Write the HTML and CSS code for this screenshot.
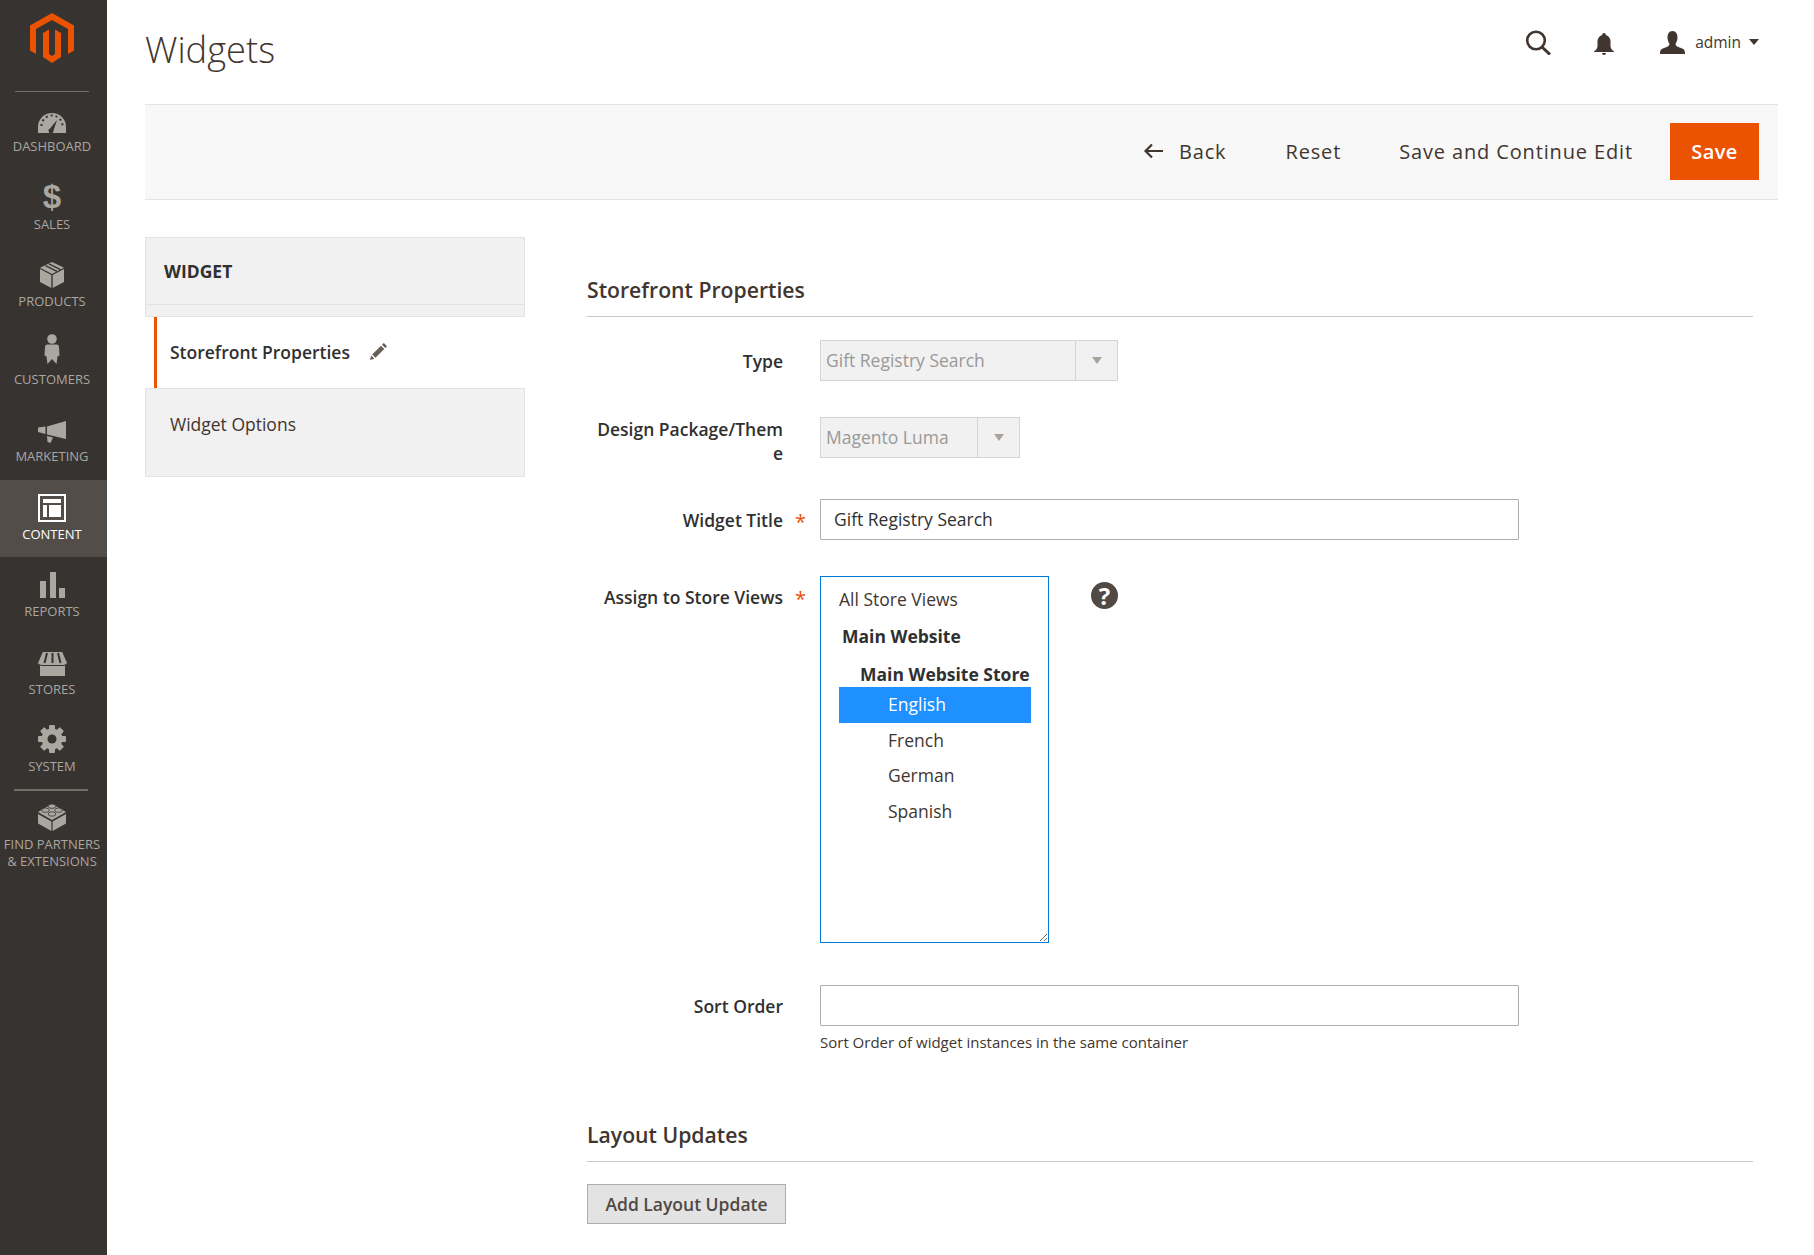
FILE: index.html
```html
<!DOCTYPE html>
<html lang="en">
<head>
  <meta charset="UTF-8">
  <title>Widgets</title>
  <link rel="stylesheet" href="styles.css">
</head>
<body>
  <nav class="sidebar">
    <div class="logo">
      <svg width="44" height="50" viewBox="0 0 44 50"><path fill="#eb5202" d="M22 0L44 12.5V37.5L38 41V16L22 7L6 16V41L0 37.5V12.5z"/><path fill="#eb5202" d="M19 16.5V41L22 43L25 41V16.5L31 20V44L22 50L13 44V20z"/></svg>
    </div>
    <ul class="menu">
      <li class="menu-item">
        <span class="menu-icon"><svg width="28" height="20" viewBox="0 0 28 20"><path fill="currentColor" d="M14 0A14 14 0 0 0 0 14V20H28V14A14 14 0 0 0 14 0z"/><path stroke="#373330" stroke-width="2" stroke-dasharray="2 3" fill="none" d="M3.5 13A10.5 10.5 0 0 1 24.500 13"/><path fill="#373330" d="M19 7L15.500 17.500A2.500 2.500 0 1 1 12 15.500z"/></svg></span>
        <span class="menu-label">DASHBOARD</span>
      </li>
      <li class="menu-item">
        <span class="menu-icon dollar">$</span>
        <span class="menu-label">SALES</span>
      </li>
      <li class="menu-item">
        <span class="menu-icon"><svg width="24" height="26" viewBox="0 0 24 26"><path fill="currentColor" d="M0 7L11.300 13V26L0 20zM24 7V20L12.700 26V13zM12 0L24 5.800L12 12L0 5.800z"/><path stroke="#373330" stroke-width="1.300" fill="none" d="M5.500 3.600L17 9.400M9 1.800L20.500 7.600"/></svg></span>
        <span class="menu-label">PRODUCTS</span>
      </li>
      <li class="menu-item">
        <span class="menu-icon customers-icon"><svg width="16" height="30" viewBox="0 0 16 30"><circle cx="8" cy="5" r="4.800" fill="currentColor"/><path fill="currentColor" d="M3 10.500H13Q15 10.500 15 13L15.500 21.500L13.500 22.500L12.500 30L8 25L3.500 30L2.500 22.500L.5 21.500L1 13Q1 10.500 3 10.500z"/></svg></span>
        <span class="menu-label">CUSTOMERS</span>
      </li>
      <li class="menu-item">
        <span class="menu-icon"><svg width="28" height="22" viewBox="0 0 28 22"><path fill="currentColor" d="M9 5.500L28 0V18L9 13.500zM0 6.500L7.500 5.500V13L0 11zM9 15L15 16.500L12.500 22L9.500 21z"/></svg></span>
        <span class="menu-label">MARKETING</span>
      </li>
      <li class="menu-item active">
        <span class="menu-icon"><svg width="28" height="28" viewBox="0 0 28 28"><rect x="1" y="1" width="26" height="26" fill="none" stroke="currentColor" stroke-width="2"/><path fill="currentColor" d="M5 5H23V9H5zM5 11H9V23H5zM11 11H23V23H11z"/></svg></span>
        <span class="menu-label">CONTENT</span>
      </li>
      <li class="menu-item">
        <span class="menu-icon"><svg width="25" height="26" viewBox="0 0 25 26"><path fill="currentColor" d="M0 9H6V26H0zM10 0H16V26H10zM19 16H25V26H19z"/></svg></span>
        <span class="menu-label">REPORTS</span>
      </li>
      <li class="menu-item">
        <span class="menu-icon"><svg width="31" height="25" viewBox="0 0 31 25"><path fill="currentColor" d="M3 12H28V25H3z"/><path fill="currentColor" stroke="#373330" stroke-width="1" d="M5.500 .5H25.500L30.500 12Q29 14.500 26 14.500H5Q2 14.500 .5 12z"/><path stroke="#373330" stroke-width="2" fill="none" d="M10 2L7.500 12M15.500 2V12M21 2L23.500 12"/></svg></span>
        <span class="menu-label">STORES</span>
      </li>
      <li class="menu-item">
        <span class="menu-icon"><svg width="28" height="28" viewBox="-14 -14 28 28"><g fill="currentColor"><circle r="10.500"/><rect x="-3" y="-14" width="6" height="28" rx="1"/><rect x="-3" y="-14" width="6" height="28" rx="1" transform="rotate(45)"/><rect x="-3" y="-14" width="6" height="28" rx="1" transform="rotate(90)"/><rect x="-3" y="-14" width="6" height="28" rx="1" transform="rotate(135)"/></g><circle r="4.500" fill="#373330"/></svg></span>
        <span class="menu-label">SYSTEM</span>
      </li>
      <li class="menu-item partners">
        <span class="menu-icon"><svg width="28" height="28" viewBox="0 0 28 28"><path fill="currentColor" d="M14 1L28 9L14 17L0 9zM0 11L13.400 18.600V28L0 20.500zM28 11V20.500L14.600 28V18.600z"/><g fill="currentColor" stroke="#373330" stroke-width=".8"><ellipse cx="14" cy="3.200" rx="3.800" ry="2.200"/><ellipse cx="7.500" cy="7.200" rx="3.800" ry="2.200"/><ellipse cx="20.500" cy="7.200" rx="3.800" ry="2.200"/><ellipse cx="14" cy="11" rx="3.800" ry="2.200"/></g></svg></span>
        <span class="menu-label">FIND PARTNERS<br>&amp; EXTENSIONS</span>
      </li>
    </ul>
  </nav>

  <div class="page">
    <header class="page-header">
      <h1 class="page-title">Widgets</h1>
      <div class="header-actions">
        <svg class="icon-search" width="27" height="25" viewBox="0 0 27 25"><circle cx="11" cy="10.500" r="8.800" fill="none" stroke="#41362f" stroke-width="2.600"/><path d="M17 17L25 24.500" stroke="#41362f" stroke-width="3" fill="none"/></svg>
        <svg class="icon-bell" width="20" height="22" viewBox="0 0 20 22"><path fill="#41362f" d="M10 0A1.800 1.800 0 0 1 11.800 2Q16.500 3.500 16.500 9V13Q16.500 16 20 18.500V19H0V18.500Q3.500 16 3.500 13V9Q3.500 3.500 8.200 2A1.800 1.800 0 0 1 10 0zM8 20H12A2 2 0 0 1 8 20z"/></svg>
        <div class="user-menu">
          <svg width="25" height="23" viewBox="0 0 25 23"><path fill="#41362f" d="M12.500 0C16 0 17.500 3 17.500 6.500C17.500 9.500 16 12 15.500 13C15.500 15 18 16 21 17C24 18 25 19 25 23H0C0 19 1 18 4 17C7 16 9.500 15 9.500 13C9 12 7.500 9.500 7.500 6.500C7.500 3 9 0 12.500 0z"/></svg>
          <span class="user-name">admin</span>
          <span class="caret"></span>
        </div>
      </div>
    </header>

    <div class="action-bar">
      <button class="action-btn back-btn">
        <svg width="20" height="16" viewBox="0 0 20 16"><path d="M20 8H2.500M9 1.500L2.500 8L9 14.500" fill="none" stroke="#41362f" stroke-width="2.200"/></svg>
        Back
      </button>
      <button class="action-btn reset-btn">Reset</button>
      <button class="action-btn continue-btn">Save and Continue Edit</button>
      <button class="save-btn">Save</button>
    </div>

    <div class="columns">
      <aside class="tabs">
        <h3 class="tabs-title">WIDGET</h3>
        <div class="tab-spacer"></div>
        <div class="tab tab-active">
          <span>Storefront Properties</span>
          <svg width="17" height="17" viewBox="0 0 17 17"><path fill="#676056" d="M0 17L1.200 12.500L4.500 15.800zM2.200 11.500L11 2.700L14.300 6L5.500 14.800zM12 1.700L13.500 .2Q13.800 0 14.100 .2L16.800 2.900Q17 3.200 16.800 3.500L15.300 5z"/></svg>
        </div>
        <div class="tab">Widget Options</div>
      </aside>

      <main class="form">
        <h2 class="section-title">Storefront Properties</h2>

        <div class="field">
          <label class="field-label">Type</label>
          <div class="select select-type">
            <span class="select-value">Gift Registry Search</span>
            <span class="select-arrow"></span>
          </div>
        </div>

        <div class="field field-tall">
          <label class="field-label">Design Package/Theme</label>
          <div class="select select-theme">
            <span class="select-value">Magento Luma</span>
            <span class="select-arrow"></span>
          </div>
        </div>

        <div class="field">
          <label class="field-label required">Widget Title</label>
          <input class="text-input" type="text" value="Gift Registry Search">
        </div>

        <div class="field field-stores">
          <label class="field-label required">Assign to Store Views</label>
          <div class="store-list">
            <div class="store-option store-all">All Store Views</div>
            <div class="store-group">Main Website</div>
            <div class="store-subgroup">Main Website Store</div>
            <div class="store-option store-view selected">English</div>
            <div class="store-option store-view">French</div>
            <div class="store-option store-view">German</div>
            <div class="store-option store-view">Spanish</div>
          </div>
          <span class="help-icon">?</span>
        </div>

        <div class="field field-note">
          <label class="field-label">Sort Order</label>
          <div>
            <input class="text-input" type="text">
            <div class="note">Sort Order of widget instances in the same container</div>
          </div>
        </div>

        <h2 class="section-title">Layout Updates</h2>
        <button class="layout-btn">Add Layout Update</button>
      </main>
    </div>
  </div>
</body>
</html>
```

FILE: styles.css
```css
* {
  box-sizing: border-box;
}
body {
  margin: 0;
  display: flex;
  min-height: 100vh;
  font-family: 'Open Sans', sans-serif;
  color: #303030;
  background-color: #fff;
}
ul {
  list-style: none;
  margin: 0;
  padding: 0;
}

/* Sidebar */
.sidebar {
  width: 107px;
  flex-shrink: 0;
  background-color: #373330;
}
.logo {
  height: 91px;
  padding-top: 13px;
  text-align: center;
}
.logo svg {
  margin-right: 3px;
}
.menu::before,
.partners::before {
  content: "";
  display: block;
  margin: 0 18px 0 15px;
  border-top: 1px solid #736d67;
}
.menu-item {
  height: 77.5px;
  padding-top: 14px;
  display: flex;
  flex-direction: column;
  align-items: center;
  padding-right: 3px;
  color: #aaa6a0;
}
.menu-item.active {
  background-color: #524d49;
  color: #fff;
}
.menu-icon {
  height: 32px;
  padding-bottom: 5px;
  display: flex;
  align-items: flex-end;
  justify-content: center;
}
.active .menu-icon {
  padding-bottom: 4px;
}
.customers-icon {
  padding-bottom: 7px;
}
.dollar {
  font-family: 'Liberation Sans', sans-serif;
  font-weight: 700;
  font-size: 33px;
  line-height: 28px;
}
.menu-label {
  font-size: 13px;
  line-height: 17.5px;
  text-align: center;
  white-space: nowrap;
}
.partners {
  height: auto;
  padding-top: 0;
}
.partners::before {
  width: 74px;
  margin: -1px 0 12px -3px;
  border-top-width: 2px;
}
.partners .menu-icon {
  height: 28px;
  padding-bottom: 0;
  margin-bottom: 5px;
}

/* Header */
.page {
  flex: 1;
  min-width: 0;
  padding: 0 36px 0 38px;
}
.page-header {
  height: 104px;
  display: flex;
  justify-content: space-between;
}
.page-title {
  margin: 24px 0 0;
  font-size: 36.300px;
  line-height: 50px;
  font-weight: 300;
  color: #41362f;
}
.header-actions {
  display: flex;
  align-items: flex-start;
  padding: 30px 19px 0 0;
}
.icon-search {
  margin-right: 42px;
}
.icon-bell {
  margin-top: 3px;
  margin-right: 46px;
}
.user-menu {
  display: flex;
  align-items: center;
  height: 24px;
}
.user-name {
  margin-left: 10px;
  font-size: 15.500px;
  color: #41362f;
}
.caret {
  margin-left: 8px;
  border-top: 6px solid #41362f;
  border-left: 5px solid transparent;
  border-right: 5px solid transparent;
}

/* Action bar */
.action-bar {
  height: 96px;
  display: flex;
  align-items: center;
  justify-content: flex-end;
  padding: 0 19px 2px 0;
  background-color: #f8f8f8;
  border-top: 1px solid #e3e3e3;
  border-bottom: 1px solid #e3e3e3;
}
.action-btn {
  padding: 0;
  border: none;
  background: none;
  font-family: inherit;
  font-size: 20px;
  letter-spacing: .86px;
  color: #41362f;
}
.back-btn {
  display: flex;
  align-items: center;
  gap: 16px;
  margin-right: 59px;
}
.reset-btn {
  margin-right: 58px;
}
.continue-btn {
  margin-right: 37px;
}
.save-btn {
  width: 89px;
  height: 57px;
  padding: 0;
  border: none;
  background-color: #eb5202;
  color: #fff;
  font-family: inherit;
  font-size: 20px;
  font-weight: 600;
  letter-spacing: .4px;
}

/* Tabs */
.columns {
  display: flex;
  align-items: flex-start;
  padding-top: 37px;
}
.tabs {
  width: 380px;
  flex-shrink: 0;
  background-color: #f1f1f1;
  border: 1px solid #e3e3e3;
  font-size: 17.5px;
  line-height: 24px;
}
.tabs-title {
  margin: 0;
  height: 67px;
  padding-left: 18px;
  font-size: 17.5px;
  line-height: 66px;
  font-weight: 700;
  border-bottom: 1px solid #e3e3e3;
}
.tab-spacer {
  height: 11px;
}
.tab {
  height: 88px;
  padding: 23px 0 0 24px;
  border-top: 1px solid #e3e3e3;
  color: #41362f;
}
.tab-active {
  display: flex;
  align-items: center;
  gap: 20px;
  height: 72px;
  margin: 0 -1px 0 -1px;
  padding: 0 0 2px 25px;
  background-color: #fff;
  font-weight: 600;
  background-image: linear-gradient(#eb5202, #eb5202);
  background-size: 3px 100%;
  background-position: 9px 0;
  background-repeat: no-repeat;
  color: #303030;
}

/* Form */
.form {
  flex: 1;
  min-width: 0;
  margin-left: 62px;
  padding-right: 25px;
}
.section-title {
  margin: 36px 0 23px;
  padding-bottom: 9px;
  font-size: 21.200px;
  line-height: 34px;
  font-weight: 600;
  color: #41362f;
  border-bottom: 1px solid #c9c6bf;
}
.field {
  display: flex;
  align-items: flex-start;
  margin-bottom: 36px;
}
.field-label {
  width: 190px;
  margin: 0 37px 0 6px;
  flex-shrink: 0;
  padding-top: 9px;
  font-size: 17.500px;
  line-height: 24px;
  font-weight: 600;
  text-align: right;
  word-break: break-all;
  position: relative;
}
.field-tall {
  margin-bottom: 34px;
}
.field-tall .field-label {
  padding-top: 0;
}
.required::after {
  content: "*";
  position: absolute;
  left: 202px;
  top: 11px;
  color: #eb5202;
  font-size: 20px;
  font-weight: 400;
}
.select {
  height: 41px;
  display: flex;
  background-color: #f1f1f1;
  border: 1px solid #d4d4d4;
  font-size: 17.500px;
  color: #999;
}
.select-type {
  width: 298px;
}
.select-theme {
  width: 200px;
}
.select-value {
  flex: 1;
  padding-left: 5px;
  line-height: 38px;
}
.select-arrow {
  width: 42px;
  flex-shrink: 0;
  display: flex;
  align-items: center;
  justify-content: center;
  border-left: 1px solid #d4d4d4;
}
.select-arrow::after {
  content: "";
  border-top: 7px solid #a8a39c;
  border-left: 5px solid transparent;
  border-right: 5px solid transparent;
}
.text-input {
  display: block;
  width: 699px;
  height: 41px;
  padding: 0 13px 2px;
  border: 1px solid #adadad;
  border-radius: 1px;
  font-family: inherit;
  font-size: 17.500px;
  color: #303030;
}

/* Store view list */
.field-stores {
  margin-bottom: 42px;
}
.store-list {
  width: 229px;
  height: 367px;
  padding: 0 17px 0 18px;
  border: 1px solid #007bdb;
  font-size: 17.500px;
  overflow: hidden;
  resize: both;
}
.store-option,
.store-group,
.store-subgroup {
  white-space: nowrap;
}
.store-all {
  height: 37px;
  padding-top: 6px;
  line-height: 32px;
  color: #41362f;
}
.store-group {
  height: 40px;
  padding: 4px 0 0 3px;
  line-height: 37px;
  font-weight: 700;
}
.store-subgroup {
  height: 33px;
  padding: 7px 0 0 21px;
  line-height: 26px;
  font-weight: 700;
}
.store-view {
  height: 35.500px;
  padding-left: 49px;
  line-height: 35px;
  color: #41362f;
}
.store-view.selected {
  background-color: #1e90ff;
  color: #fff;
}
.help-icon {
  width: 27px;
  height: 27px;
  margin: 6px 0 0 42px;
  border-radius: 50%;
  background-color: #514943;
  color: #fff;
  font-size: 24px;
  font-weight: 700;
  line-height: 27px;
  text-align: center;
}
.note {
  margin-top: 6px;
  font-size: 15px;
  line-height: 21px;
  color: #41362f;
}
.field-note {
  margin-bottom: 0;
}
.field-note + .section-title {
  margin-top: 65px;
  margin-bottom: 22px;
}
.layout-btn {
  display: block;
  width: 199px;
  height: 40px;
  padding: 0;
  background-color: #e3e3e3;
  border: 1px solid #adadad;
  font-family: inherit;
  font-size: 17.500px;
  font-weight: 600;
  color: #514943;
}
```
